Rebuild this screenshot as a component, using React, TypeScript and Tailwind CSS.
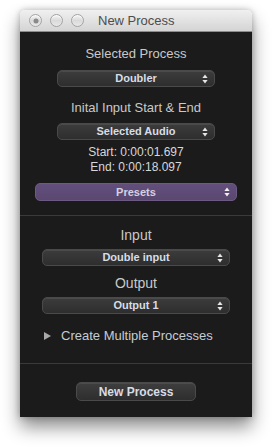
import React from 'react'

const font = { fontFamily: '"Liberation Sans", Arial, sans-serif' }

const Arrows = ({ color = '#e6e6e6' }: { color?: string }) => (
  <svg width="6" height="10" viewBox="0 0 6 10" className="absolute right-[6px] top-1/2 -translate-y-1/2">
    <path d="M3 0.5 L5.6 4 L0.4 4 Z" fill={color} />
    <path d="M3 9.5 L5.6 6 L0.4 6 Z" fill={color} />
  </svg>
)

const Select = ({ label, width }: { label: string; width: string }) => (
  <div
    className={`relative ${width} h-[17px] rounded-[5px] border border-[#4a4a4a] bg-gradient-to-b from-[#3c3c3c] to-[#2e2e2e] shadow-[inset_0_1px_0_rgba(255,255,255,0.08)] flex items-center justify-center`}
  >
    <span className="text-[11px] font-bold text-[#d6dde6] leading-none">{label}</span>
    <Arrows />
  </div>
)

const Light = ({ dot }: { dot?: boolean }) => (
  <div className="relative w-[13px] h-[13px] rounded-full border border-[#a3a3a3] bg-gradient-to-b from-[#f4f4f4] via-[#dadada] to-[#e8e8e8] shadow-[inset_0_1px_1px_rgba(255,255,255,0.8)]">
    {dot && <div className="absolute left-1/2 top-1/2 -translate-x-1/2 -translate-y-1/2 w-[5px] h-[5px] rounded-full bg-[#8a8a8a]" />}
  </div>
)

export default function App() {
  return (
    <div className="w-[272px] h-[447px] bg-white pt-[10px] px-[20px]" style={font}>
      <div className="w-[232px] rounded-t-[5px] shadow-[0_10px_18px_rgba(0,0,0,0.45),0_0_6px_rgba(0,0,0,0.25)]">
        {/* Title bar */}
        <div className="relative h-[22px] rounded-t-[5px] border-b border-[#8c8c8c] bg-gradient-to-b from-[#f0f0f0] to-[#d4d4d4] flex items-center">
          <div className="flex items-center gap-[8px] pl-[9px]">
            <Light dot />
            <Light />
            <Light />
          </div>
          <span className="ml-[14px] text-[13px] text-[#4d4d4d]">New Process</span>
        </div>

        {/* Body */}
        <div className="bg-[#1b1b1b] h-[385px] flex flex-col items-center text-[#c9c9c9]">
          <div className="mt-[14px] text-[13px] leading-[16px]">Selected Process</div>
          <div className="mt-[8px]"><Select label="Doubler" width="w-[158px]" /></div>
          <div className="mt-[13px] text-[13px] leading-[16px]">Inital Input Start &amp; End</div>
          <div className="mt-[7px]"><Select label="Selected Audio" width="w-[158px]" /></div>
          <div className="mt-[5px] text-[12px] leading-[15px] text-[#d4d8dc]">Start: 0:00:01.697</div>
          <div className="text-[12px] leading-[15px] text-[#d4d8dc]">End: 0:00:18.097</div>
          <div className="relative mt-[8px] w-[202px] h-[18px] rounded-[5px] border border-[#6c5a82] bg-gradient-to-b from-[#634e7c] to-[#5a4870] flex items-center justify-center">
            <span className="text-[11px] font-bold text-[#d6d0e0] leading-none">Presets</span>
            <Arrows color="#f0f0f0" />
          </div>

          <div className="mt-[14px] w-full h-px bg-[#3a3a3a]" />

          <div className="mt-[11px] text-[14px] leading-[17px]">Input</div>
          <div className="mt-[5px]"><Select label="Double input" width="w-[188px]" /></div>
          <div className="mt-[9px] text-[14px] leading-[17px]">Output</div>
          <div className="mt-[5px]"><Select label="Output 1" width="w-[188px]" /></div>

          <div className="mt-[14px] w-full flex items-center pl-[24px] text-[13px] leading-[16px]">
            <svg width="7" height="8" viewBox="0 0 7 8">
              <path d="M0 0 L7 4 L0 8 Z" fill="#a9a9a9" />
            </svg>
            <span className="ml-[10px] text-[#c6ccd4]">Create Multiple Processes</span>
          </div>

          <div className="mt-[19px] w-full h-px bg-[#3a3a3a]" />

          <div className="mt-[18px] w-[120px] h-[19px] rounded-[5px] border border-[#4a4a4a] bg-gradient-to-b from-[#3e3e3e] to-[#2e2e2e] shadow-[inset_0_1px_0_rgba(255,255,255,0.08)] flex items-center justify-center">
            <span className="text-[12px] font-bold text-[#d6dde6] leading-none">New Process</span>
          </div>
        </div>
      </div>
    </div>
  )
}
